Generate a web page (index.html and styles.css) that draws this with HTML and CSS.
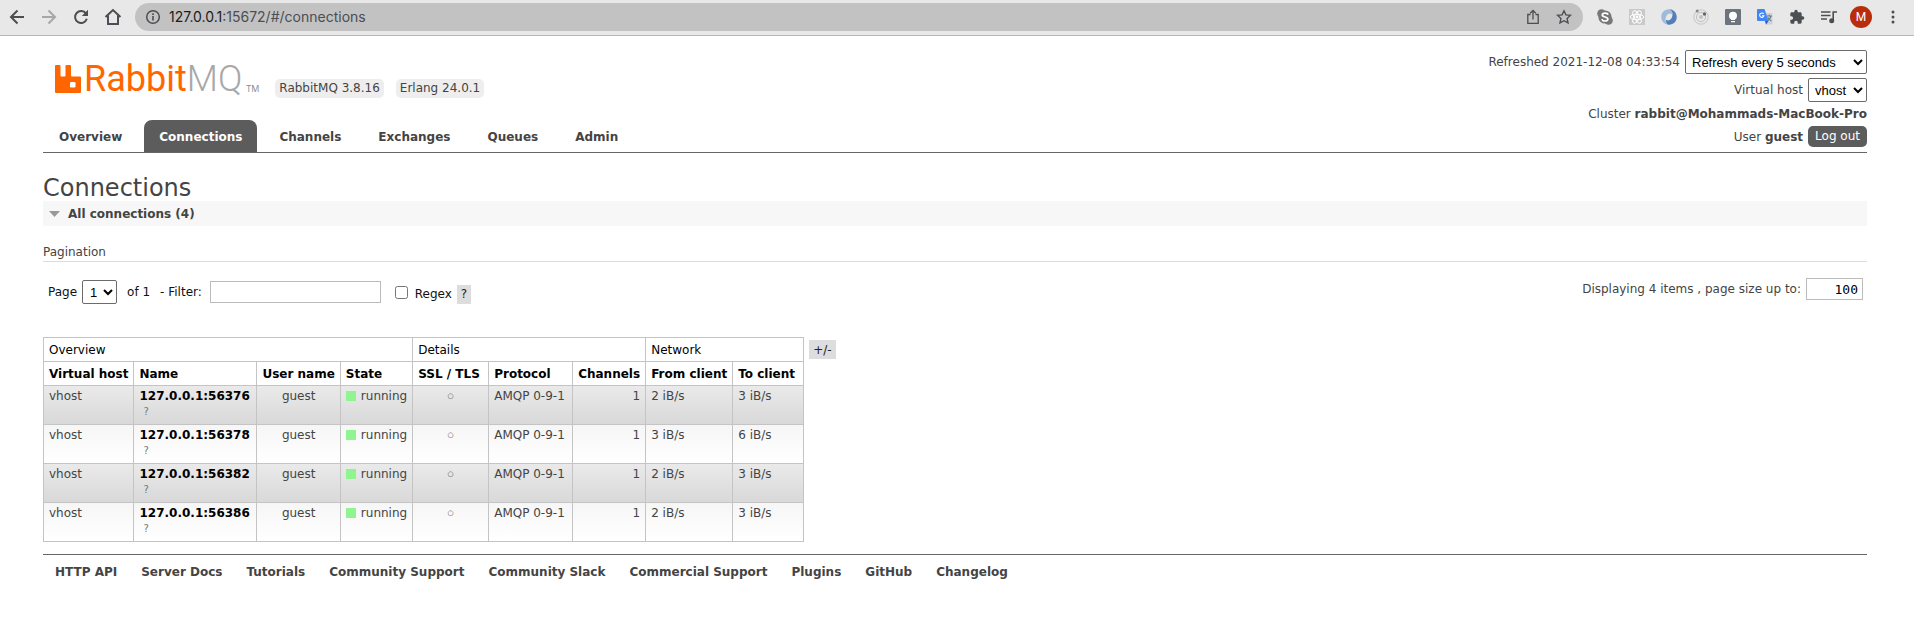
FILE: index.html
```html
<!DOCTYPE html>
<html lang="en">
<head>
<meta charset="utf-8">
<title>RabbitMQ Management</title>
<link rel="stylesheet" href="styles.css">
</head>
<body>
<div class="browser">
  <button class="tool" aria-label="Back"><svg width="16" height="16" viewBox="0 0 16 16" fill="none" stroke="#4b4e52" stroke-width="2"><path d="M15 8H2.500M8.500 1.500L2 8l6.500 6.500"/></svg></button>
  <button class="tool" aria-label="Forward"><svg width="16" height="16" viewBox="0 0 16 16" fill="none" stroke="#a5a7a9" stroke-width="2"><path d="M1 8h12.500M7.500 1.500L14 8l-6.500 6.500"/></svg></button>
  <button class="tool" aria-label="Reload"><svg width="16" height="16" viewBox="0 0 16 16"><path d="M13 4.600A6 6 0 1 0 13.800 9.800" fill="none" stroke="#4b4e52" stroke-width="2"/><path d="M15 .800V7H8.800z" fill="#4b4e52"/></svg></button>
  <button class="tool" aria-label="Home"><svg width="18" height="18" viewBox="0 0 18 18" fill="none" stroke="#4b4e52" stroke-width="2"><path d="M1.500 9L9 2l7.500 7M4 7.500V16h10V7.500"/></svg></button>
  <div class="address">
    <svg width="16" height="16" viewBox="0 0 16 16"><circle cx="8" cy="8" r="6.300" fill="none" stroke="#4b4e52" stroke-width="1.500"/><path d="M7.200 7h1.600v4.500H7.200zM7.200 4.300h1.600v1.600H7.200z" fill="#4b4e52"/></svg>
    <span class="url"><span class="url-host">127.0.0.1</span>:15672/#/connections</span>
    <svg width="14" height="16" viewBox="0 0 14 16" fill="none" stroke="#4b4e52" stroke-width="1.300"><path d="M4.500 5.500H1.800V14.300H12.200V5.500H9.500M7 10.500V2M4.200 4.300L7 1.500l2.800 2.800"/></svg>
    <svg width="16" height="16" viewBox="0 0 16 16" fill="none" stroke="#4b4e52" stroke-width="1.400"><path d="M8 1.800l1.900 4.100 4.500.500-3.300 3.100.9 4.400L8 11.700l-4 2.200.900-4.400L1.600 6.400l4.500-.500z"/></svg>
  </div>
  <div class="extensions">
    <span class="tool"><svg width="16" height="16" viewBox="0 0 16 16"><circle cx="8" cy="8" r="6.600" fill="#777"/><circle cx="4.500" cy="4.500" r="4.300" fill="#777"/><circle cx="11.500" cy="11.500" r="4.300" fill="#777"/><path d="M11 5.700C10.500 3.500 5.300 3.400 5.300 6c0 2.500 5.600 1.500 5.600 4.100 0 2.700-5.500 2.400-5.900 0" fill="none" stroke="#fff" stroke-width="1.700"/></svg></span>
    <span class="tool"><svg width="16" height="16" viewBox="0 0 16 16"><rect width="16" height="16" fill="#c9c9c9"/><g fill="none" stroke="#fff"><ellipse cx="8" cy="8" rx="6.800" ry="2.700"/><ellipse cx="8" cy="8" rx="6.800" ry="2.700" transform="rotate(60 8 8)"/><ellipse cx="8" cy="8" rx="6.800" ry="2.700" transform="rotate(120 8 8)"/></g><circle cx="8" cy="8" r="1.400" fill="#fff"/></svg></span>
    <span class="tool"><svg width="16" height="16" viewBox="0 0 16 16"><path d="M9 .300C3 0 0 4 .300 8.500c.300 4 3.200 6.800 6.700 7C4.500 13.500 4 11 4.800 8.500 5.500 6 7.500 4.500 11 5c0-2-.500-3.500-2-4.700z" fill="#9fbbdc"/><path d="M7 15.700c6 .300 9-3.700 8.700-8.200C15.400 3.500 12.500.700 9 .300c2.500 2.200 3 4.700 2.200 7.200C10.500 10 8.500 11.500 5 11c0 2 .500 3.500 2 4.700z" fill="#527fb7"/><ellipse cx="8" cy="8" rx="2.600" ry="3.600" transform="rotate(25 8 8)" fill="#e8e8e8"/></svg></span>
    <span class="tool"><svg width="16" height="16" viewBox="0 0 16 16"><circle cx="8" cy="8" r="7.200" fill="none" stroke="#c4c4c4"/><circle cx="8" cy="8" r="4.600" fill="none" stroke="#bebebe"/><circle cx="8" cy="8" r="2" fill="#c2c2c2"/><circle cx="4.200" cy="1.900" r="1.500" fill="#858585"/><circle cx="11.500" cy="5" r="1.700" fill="#666"/></svg></span>
    <span class="tool"><svg width="16" height="16" viewBox="0 0 16 16"><rect width="16" height="16" rx="1" fill="#6c757d"/><circle cx="8" cy="6.800" r="4" fill="#fff"/><path d="M6 9h4v2H6zM6 12h4v1.300H6z" fill="#fff"/></svg></span>
    <span class="tool"><svg width="16" height="16" viewBox="0 0 16 16"><path d="M6 4h9.500v11.500H9z" fill="#cfd1d3"/><path d="M9.500 7H15M12.200 5.800V7M14 7c-.600 2.500-2 4-3.500 4.800M10.800 8.500c.800 1.700 2 2.800 3.700 3.500" fill="none" stroke="#687f8f" stroke-width="1.100"/><path d="M1 0h6.500l4 12H1a1 1 0 0 1-1-1V1a1 1 0 0 1 1-1z" fill="#4285f4"/><path d="M8 12h3.500L9 15.800z" fill="#3057c5"/><path d="M6.700 4.900A2.200 2.200 0 1 0 7 6.700H4.900" fill="none" stroke="#fff" stroke-width="1.100"/></svg></span>
    <span class="tool"><svg width="16" height="16" viewBox="0 0 24 24"><path d="M20.500 11H19V7c0-1.100-.900-2-2-2h-4V3.500a2.500 2.500 0 0 0-5 0V5H4c-1.100 0-2 .900-2 2v3.800h1.500a2.700 2.700 0 0 1 0 5.400H2V20c0 1.100.9 2 2 2h3.800v-1.500a2.700 2.700 0 0 1 5.400 0V22H17c1.100 0 2-.900 2-2v-4h1.500a2.500 2.500 0 0 0 0-5z" fill="#4b4e52"/></svg></span>
    <span class="tool"><svg width="16" height="16" viewBox="0 0 16 16" fill="none" stroke="#4b4e52" stroke-width="1.600"><path d="M0 3h9.500M0 6.500h9.500M0 10h6M12.200 12V3H16"/><circle cx="10.700" cy="11.700" r="1.700" fill="#4b4e52"/></svg></span>
    <button class="tool"><span class="avatar">M</span></button>
    <button class="tool" aria-label="Menu"><svg width="4" height="14" viewBox="0 0 4 14" fill="#4b4e52"><circle cx="2" cy="2" r="1.500"/><circle cx="2" cy="7" r="1.500"/><circle cx="2" cy="12" r="1.500"/></svg></button>
  </div>
</div>

<div class="page">
  <header class="header">
    <div class="brand-side">
      <div class="brand">
        <a class="logo" href="#">
          <svg width="26" height="28" viewBox="0 0 26 28"><path d="M1 0h3.500q1 0 1 1v9.500q0 1 1 1h3q1 0 1-1V1q0-1 1-1H15q1 0 1 1v9.500q0 1 1 1h8q1 0 1 1V27q0 1-1 1H1q-1 0-1-1V1q0-1 1-1z" fill="#ff6600"/><rect x="15" y="17" width="5.500" height="5.500" rx="1.200" fill="#fff"/></svg>
          <span class="logo-name">Rabbit<span class="logo-mq">MQ</span></span><span class="logo-tm">TM</span>
        </a>
        <span class="version">RabbitMQ 3.8.16</span>
        <span class="version">Erlang 24.0.1</span>
      </div>
      <nav class="tabs">
        <a href="#">Overview</a>
        <a href="#" class="selected">Connections</a>
        <a href="#">Channels</a>
        <a href="#">Exchanges</a>
        <a href="#">Queues</a>
        <a href="#">Admin</a>
      </nav>
    </div>
    <div class="status">
      <div class="status-row"><label for="refresh">Refreshed 2021-12-08 04:33:54</label><select id="refresh" class="refresh"><option>Refresh every 5 seconds</option></select></div>
      <div class="status-row"><label for="vhost">Virtual host</label><select id="vhost" class="vhost"><option>vhost</option></select></div>
      <div class="status-row"><span>Cluster <b>rabbit@Mohammads-MacBook-Pro</b></span></div>
      <div class="status-row"><span>User <b>guest</b></span><button class="logout">Log out</button></div>
    </div>
  </header>

  <main>
    <h1>Connections</h1>
    <h2 class="section"><svg width="11" height="6" viewBox="0 0 11 6"><path d="M0 0h11L5.500 6z" fill="#999"/></svg>All connections (4)</h2>
    <h3 class="subhead">Pagination</h3>
    <div class="controls">
      <div class="filter">
        <label for="page">Page</label>
        <select id="page" class="page-select"><option>1</option></select>
        <span class="of">of 1</span>
        <label for="filter">- Filter:</label>
        <input id="filter" class="filter-text" type="text">
        <input id="regex" class="regex" type="checkbox">
        <label class="low" for="regex">Regex</label>
        <button class="chip low">?</button>
      </div>
      <div class="page-size"><label for="size">Displaying 4 items , page size up to:</label><input id="size" type="text" value="100"></div>
    </div>

    <div class="listing">
      <table>
        <colgroup><col class="c-vhost"><col class="c-name"><col class="c-user"><col class="c-state"><col class="c-ssl"><col class="c-proto"><col class="c-chan"><col class="c-from"><col class="c-to"></colgroup>
        <thead>
          <tr class="groups"><th colspan="4">Overview</th><th colspan="3">Details</th><th colspan="2">Network</th></tr>
          <tr><th>Virtual host</th><th>Name</th><th>User name</th><th>State</th><th>SSL / TLS</th><th>Protocol</th><th>Channels</th><th>From client</th><th>To client</th></tr>
        </thead>
        <tbody>
          <tr><td>vhost</td><td><a href="#">127.0.0.1:56376</a><small>?</small></td><td class="mid">guest</td><td><i class="light"></i>running</td><td class="mid tls">○</td><td>AMQP 0-9-1</td><td class="num">1</td><td>2 iB/s</td><td>3 iB/s</td></tr>
          <tr><td>vhost</td><td><a href="#">127.0.0.1:56378</a><small>?</small></td><td class="mid">guest</td><td><i class="light"></i>running</td><td class="mid tls">○</td><td>AMQP 0-9-1</td><td class="num">1</td><td>3 iB/s</td><td>6 iB/s</td></tr>
          <tr><td>vhost</td><td><a href="#">127.0.0.1:56382</a><small>?</small></td><td class="mid">guest</td><td><i class="light"></i>running</td><td class="mid tls">○</td><td>AMQP 0-9-1</td><td class="num">1</td><td>2 iB/s</td><td>3 iB/s</td></tr>
          <tr><td>vhost</td><td><a href="#">127.0.0.1:56386</a><small>?</small></td><td class="mid">guest</td><td><i class="light"></i>running</td><td class="mid tls">○</td><td>AMQP 0-9-1</td><td class="num">1</td><td>2 iB/s</td><td>3 iB/s</td></tr>
        </tbody>
      </table>
      <button class="chip columns">+/-</button>
    </div>
  </main>

  <footer class="footer">
    <a href="#">HTTP API</a><a href="#">Server Docs</a><a href="#">Tutorials</a><a href="#">Community Support</a><a href="#">Community Slack</a><a href="#">Commercial Support</a><a href="#">Plugins</a><a href="#">GitHub</a><a href="#">Changelog</a>
  </footer>
</div>
</body>
</html>
```
FILE: styles.css
```css
* { box-sizing: border-box; }
body { margin: 0; background: #fff; color: #444; font: 12px/16px Verdana, "DejaVu Sans", sans-serif; }
button { border: 0; padding: 0; background: none; font: inherit; color: inherit; }
a { color: inherit; text-decoration: none; }
svg { display: block; flex: none; }

.browser { display: flex; align-items: center; height: 36px; padding: 0 5px 1px 1px; background: #e8e8e8; border-bottom: 1px solid #b8b8b8; }
.tool { display: flex; flex: none; align-items: center; justify-content: center; width: 32px; height: 28px; }
.address { display: flex; flex: 1; align-items: center; gap: 8px; height: 28px; margin: 0 6px; padding: 0 11px 0 10px; border-radius: 14px; background: #c2c2c2; }
.address svg:nth-of-type(3) { margin-left: 8px; }
.url { flex: 1; font: 14px/20px Inter, sans-serif; color: #4b4e52; }
.url-host { color: #1c1c1e; }
.extensions { display: flex; }
.avatar { width: 22px; height: 22px; border-radius: 50%; background: #b92d0d; color: #fff; font: 12px/22px Roboto, sans-serif; text-align: center; }

.page { padding: 14px 47px 0 43px; }
.header { display: flex; justify-content: space-between; border-bottom: 1px solid #666; }
.brand-side { display: flex; flex-direction: column; justify-content: space-between; }
.brand { display: flex; align-items: flex-end; gap: 12px; height: 48px; padding: 12px 0 0 12px; }
.logo { display: flex; align-self: flex-start; align-items: center; height: 34px; margin-right: 4px; }
.logo-name { font: 36px/34px Roboto, sans-serif; color: #ff6600; margin-left: 3px; }
.logo-mq { font-weight: 300; color: #a8a8a8; }
.logo-tm { align-self: flex-end; margin-left: 4px; font: 9px/14px "Open Sans", sans-serif; color: #888; }
.version { padding: 1px 4px 2px; border-radius: 5px; background: #eee; }
.tabs { display: flex; gap: 7px; padding-left: 1px; }
.tabs a { padding: 9px 15px 7px; border-radius: 8px 8px 0 0; font-weight: bold; }
.tabs .selected { background: #5c5c5c; color: #fff; }

.status { display: flex; flex-direction: column; gap: 4px; padding-bottom: 5px; }
.status-row { display: flex; align-items: center; justify-content: flex-end; gap: 5px; }
select { height: 24px; border: 1px solid #6b6b6b; border-radius: 2px; padding: 0 2px; background: #fff; color: #000; font: 13px "Liberation Sans", Arial, sans-serif; }
.refresh { width: 182px; }
.vhost { width: 59px; }
.logout { padding: 2px 7px 3px; border-radius: 5px; background: #5c5c5c; color: #fff; }

h1 { margin: 22px 0 0; font: 24px/26px Verdana, "DejaVu Sans", sans-serif; }
.section { display: flex; align-items: center; gap: 8px; height: 25px; margin: 0; padding-left: 6px; background: #f7f7f7; font-size: 12px; }
.subhead { margin: 18px 0 0; padding-bottom: 1px; border-bottom: 1px solid #ddd; font-size: 12px; font-weight: normal; }
.controls { display: flex; justify-content: space-between; padding: 16px 4px 33px 5px; }
.filter, .page-size { display: flex; align-items: center; gap: 5px; }
.filter { color: #111; margin-top: 2px; }
.page-select { width: 35px; padding: 0 3px; }
.of { margin: 0 5px; }
input[type="text"] { height: 22px; border: 1px solid #bbb; padding: 0 4px; font: 13px "DejaVu Sans Mono", monospace; }
.filter-text { width: 171px; margin-left: 3px; }
.regex { width: 13px; height: 13px; margin: 0 2px 0 9px; }
.low { margin-top: 4px; }
.page-size { align-self: flex-start; }
.page-size input { width: 57px; text-align: right; }
.chip { height: 19px; padding: 0 4px; background: #ddd; color: #222; }

.listing { display: flex; align-items: flex-start; gap: 5px; }
.columns { margin-top: 3px; }
table { border-collapse: collapse; }
th, td { border: 1px solid #c4c4c4; padding: 4px 5px 3px; text-align: left; vertical-align: top; white-space: nowrap; }
th { color: #000; }
.groups th { font-weight: normal; }
td { padding: 2px 5px 4px; }
tbody tr { background: linear-gradient(#f6f6f6, #fff); }
tbody tr:nth-child(odd) { background: linear-gradient(#eaeaea, #d8d8d8); }
td a { font-weight: bold; color: #000; }
td small { display: block; padding-left: 4px; font-size: 10px; color: #777; }
.mid { text-align: center; }
.num { text-align: right; }
.tls { font-size: 7px; }
.light { display: inline-block; width: 10px; height: 10px; margin-right: 5px; vertical-align: -1px; background: #90f590; }
.c-vhost { width: 90px; }
.c-name { width: 123px; }
.c-user { width: 83px; }
.c-state { width: 71px; }
.c-ssl { width: 76px; }
.c-proto { width: 84px; }
.c-chan { width: 73px; }
.c-from { width: 87px; }
.c-to { width: 71px; }

.footer { display: flex; flex-wrap: wrap; gap: 24px; margin-top: 12px; padding: 9px 12px; border-top: 1px solid #666; font-weight: bold; }
```
